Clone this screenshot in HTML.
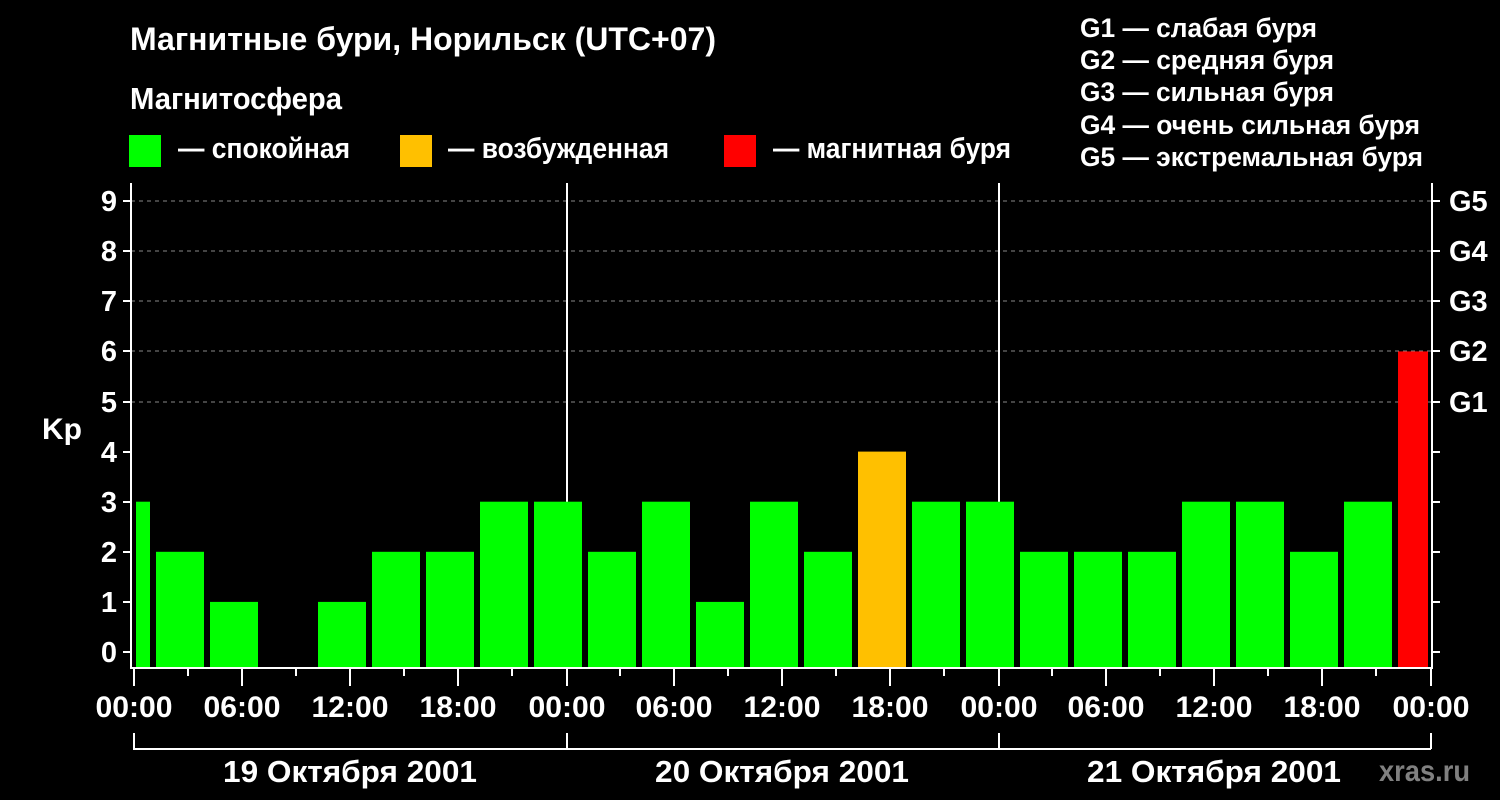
<!DOCTYPE html>
<html><head><meta charset="utf-8"><style>html,body{margin:0;padding:0;background:#000;}svg{display:block}</style></head>
<body>
<svg width="1500" height="800" viewBox="0 0 1500 800" xmlns="http://www.w3.org/2000/svg" font-family="Liberation Sans, sans-serif" font-weight="bold">
<rect width="1500" height="800" fill="#000"/>
<g fill="#fff">
<text x="130" y="50" font-size="32" textLength="586" lengthAdjust="spacingAndGlyphs">Магнитные бури, Норильск (UTC+07)</text>
<text x="130" y="109" font-size="31" textLength="212" lengthAdjust="spacingAndGlyphs">Магнитосфера</text>
<text x="178" y="158" font-size="29" textLength="172" lengthAdjust="spacingAndGlyphs">— спокойная</text>
<text x="448" y="158" font-size="29" textLength="221" lengthAdjust="spacingAndGlyphs">— возбужденная</text>
<text x="773" y="158" font-size="29" textLength="238" lengthAdjust="spacingAndGlyphs">— магнитная буря</text>
<g font-size="27">
<text x="1080" y="37" textLength="237" lengthAdjust="spacingAndGlyphs">G1 — слабая буря</text>
<text x="1080" y="69" textLength="254" lengthAdjust="spacingAndGlyphs">G2 — средняя буря</text>
<text x="1080" y="101" textLength="254" lengthAdjust="spacingAndGlyphs">G3 — сильная буря</text>
<text x="1080" y="134" textLength="340" lengthAdjust="spacingAndGlyphs">G4 — очень сильная буря</text>
<text x="1080" y="166" textLength="343" lengthAdjust="spacingAndGlyphs">G5 — экстремальная буря</text>
</g>
</g>
<rect x="129" y="135" width="32" height="32" fill="#00ff00"/>
<rect x="400" y="135" width="32" height="32" fill="#ffc000"/>
<rect x="724" y="135" width="32" height="32" fill="#ff0000"/>

<g stroke="#888" stroke-width="1" stroke-dasharray="4,4">
<line x1="131" y1="201" x2="1431" y2="201"/>
<line x1="131" y1="251" x2="1431" y2="251"/>
<line x1="131" y1="301" x2="1431" y2="301"/>
<line x1="131" y1="351" x2="1431" y2="351"/>
<line x1="131" y1="402" x2="1431" y2="402"/>
</g>
<g stroke="#fff" stroke-width="2">
<line x1="567" y1="183" x2="567" y2="668"/>
<line x1="999" y1="183" x2="999" y2="668"/>
</g>
<g fill="#00ff00">
<rect x="136" y="501.7" width="14" height="166.3"/>
<rect x="156" y="551.8" width="48" height="116.2"/>
<rect x="210" y="601.9" width="48" height="66.1"/>
<rect x="318" y="601.9" width="48" height="66.1"/>
<rect x="372" y="551.8" width="48" height="116.2"/>
<rect x="426" y="551.8" width="48" height="116.2"/>
<rect x="480" y="501.7" width="48" height="166.3"/>
<rect x="534" y="501.7" width="48" height="166.3"/>
<rect x="588" y="551.8" width="48" height="116.2"/>
<rect x="642" y="501.7" width="48" height="166.3"/>
<rect x="696" y="601.9" width="48" height="66.1"/>
<rect x="750" y="501.7" width="48" height="166.3"/>
<rect x="804" y="551.8" width="48" height="116.2"/>
<rect x="912" y="501.7" width="48" height="166.3"/>
<rect x="966" y="501.7" width="48" height="166.3"/>
<rect x="1020" y="551.8" width="48" height="116.2"/>
<rect x="1074" y="551.8" width="48" height="116.2"/>
<rect x="1128" y="551.8" width="48" height="116.2"/>
<rect x="1182" y="501.7" width="48" height="166.3"/>
<rect x="1236" y="501.7" width="48" height="166.3"/>
<rect x="1290" y="551.8" width="48" height="116.2"/>
<rect x="1344" y="501.7" width="48" height="166.3"/>
</g>
<rect x="858" y="451.6" width="48" height="216.4" fill="#ffc000"/>
<rect x="1398" y="351.4" width="30" height="316.6" fill="#ff0000"/>

<g stroke="#fff" stroke-width="2" fill="none">
<line x1="131" y1="183" x2="131" y2="669"/>
<line x1="1432" y1="183" x2="1432" y2="669"/>
<line x1="130" y1="668" x2="1433" y2="668"/>
<path d="M123 652H131M123 602H131M123 552H131M123 502H131M123 452H131M123 402H131M123 351H131M123 301H131M123 251H131M123 201H131"/>
<path d="M1432 652H1440M1432 602H1440M1432 552H1440M1432 502H1440M1432 452H1440M1432 402H1440M1432 351H1440M1432 301H1440M1432 251H1440M1432 201H1440"/>
<path d="M134 668V686M188 668V676M242 668V686M296 668V676M350 668V686M404 668V676M458 668V686M512 668V676M567 668V686M620 668V676M674 668V686M728 668V676M782 668V686M836 668V676M890 668V686M944 668V676M999 668V686M1052 668V676M1106 668V686M1160 668V676M1214 668V686M1268 668V676M1322 668V686M1376 668V676M1431 668V686"/>
<path d="M134 733V749H1431M567 733V749M999 733V749M1431 733V749"/>
</g>
<g fill="#fff" font-size="29" text-anchor="end">
<text x="117" y="662">0</text><text x="117" y="612">1</text><text x="117" y="562">2</text><text x="117" y="512">3</text><text x="117" y="462">4</text><text x="117" y="412">5</text><text x="117" y="361">6</text><text x="117" y="311">7</text><text x="117" y="261">8</text><text x="117" y="211">9</text>
</g>
<text x="42" y="439" fill="#fff" font-size="30">Kp</text>
<g fill="#fff" font-size="29">
<text x="1449" y="211">G5</text><text x="1449" y="261">G4</text><text x="1449" y="311">G3</text><text x="1449" y="361">G2</text><text x="1449" y="412">G1</text>
</g>
<g fill="#fff" font-size="30" text-anchor="middle">
<text x="134" y="717" textLength="77" lengthAdjust="spacingAndGlyphs">00:00</text><text x="242" y="717" textLength="77" lengthAdjust="spacingAndGlyphs">06:00</text><text x="350" y="717" textLength="77" lengthAdjust="spacingAndGlyphs">12:00</text><text x="458" y="717" textLength="77" lengthAdjust="spacingAndGlyphs">18:00</text>
<text x="567" y="717" textLength="77" lengthAdjust="spacingAndGlyphs">00:00</text><text x="674" y="717" textLength="77" lengthAdjust="spacingAndGlyphs">06:00</text><text x="782" y="717" textLength="77" lengthAdjust="spacingAndGlyphs">12:00</text><text x="890" y="717" textLength="77" lengthAdjust="spacingAndGlyphs">18:00</text>
<text x="999" y="717" textLength="77" lengthAdjust="spacingAndGlyphs">00:00</text><text x="1106" y="717" textLength="77" lengthAdjust="spacingAndGlyphs">06:00</text><text x="1214" y="717" textLength="77" lengthAdjust="spacingAndGlyphs">12:00</text><text x="1322" y="717" textLength="77" lengthAdjust="spacingAndGlyphs">18:00</text>
<text x="1431" y="717" textLength="77" lengthAdjust="spacingAndGlyphs">00:00</text>
<text x="350" y="782" font-size="31" textLength="254" lengthAdjust="spacingAndGlyphs">19 Октября 2001</text>
<text x="782" y="782" font-size="31" textLength="254" lengthAdjust="spacingAndGlyphs">20 Октября 2001</text>
<text x="1214" y="782" font-size="31" textLength="254" lengthAdjust="spacingAndGlyphs">21 Октября 2001</text>
</g>
<text x="1379" y="781" fill="#808080" font-size="30" textLength="91" lengthAdjust="spacingAndGlyphs">xras.ru</text>
</svg>
</body></html>
